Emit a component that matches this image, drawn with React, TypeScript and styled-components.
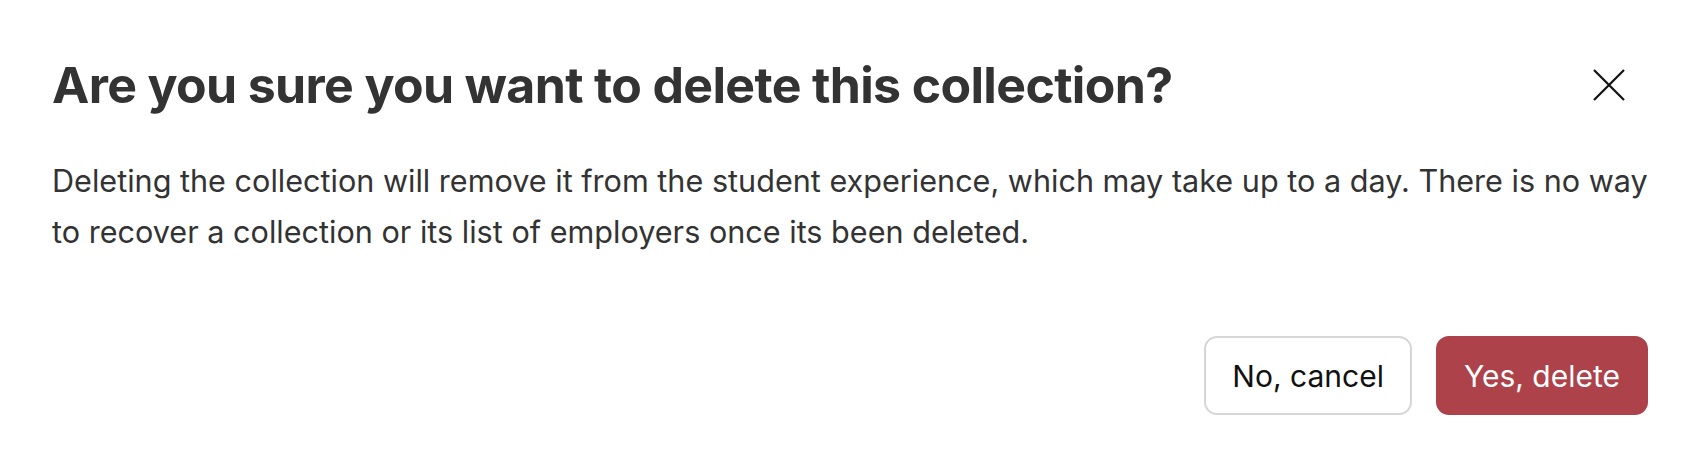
import React from "react";
import styled, { createGlobalStyle } from "styled-components";

const Global = createGlobalStyle`
  html, body { margin: 0; padding: 0; background: #ffffff; }
  body { font-family: Inter, "Liberation Sans", sans-serif; }
`;

const Dialog = styled.div`
  box-sizing: border-box;
  width: 1702px;
  height: 466px;
  padding: 57px 54px 51px 52px;
  display: flex;
  flex-direction: column;
  background: #fff;
`;

const Header = styled.div`
  display: flex;
  align-items: center;
  justify-content: space-between;
`;

const Title = styled.h2`
  margin: 0;
  font-family: Inter, "Liberation Sans", sans-serif;
  font-weight: 700;
  font-size: 50px;
  line-height: 56px;
  letter-spacing: -0.65px;
  color: #333333;
`;

const CloseButton = styled.button`
  width: 44px;
  height: 44px;
  margin-right: 17px;
  padding: 0;
  border: none;
  background: transparent;
  display: flex;
  align-items: center;
  justify-content: center;
  cursor: pointer;
`;

const Body = styled.p`
  margin: 42px 0 0;
  font-family: Inter, "Liberation Sans", sans-serif;
  font-size: 30.6px;
  line-height: 51px;
  color: #333333;
`;

const Footer = styled.div`
  margin-top: auto;
  display: flex;
  justify-content: flex-end;
  gap: 24px;
`;

const Button = styled.button<{ $variant: "secondary" | "danger" }>`
  box-sizing: border-box;
  height: 79px;
  padding: 0 26px;
  border-radius: 13px;
  font-family: Inter, "Liberation Sans", sans-serif;
  font-size: 30px;
  font-weight: 400;
  cursor: pointer;
  border: 2px solid ${(p) => (p.$variant === "danger" ? "#ad424a" : "#d6d6d6")};
  background: ${(p) => (p.$variant === "danger" ? "#ad424a" : "#ffffff")};
  color: ${(p) => (p.$variant === "danger" ? "#ffffff" : "#111111")};
`;

const XIcon = () => (
  <svg width="32" height="32" viewBox="0 0 32 32" fill="none">
    <path d="M1 1L31 31M31 1L1 31" stroke="#111" strokeWidth="2.2" />
  </svg>
);

export default function App() {
  return (
    <>
      <Global />
      <Dialog role="dialog">
        <Header>
          <Title>Are you sure you want to delete this collection?</Title>
          <CloseButton aria-label="Close">
            <XIcon />
          </CloseButton>
        </Header>
        <Body>
          Deleting the collection will remove it from the student experience, which may take up to a day. There is no way
          to recover a collection or its list of employers once its been deleted.
        </Body>
        <Footer>
          <Button $variant="secondary">No, cancel</Button>
          <Button $variant="danger">Yes, delete</Button>
        </Footer>
      </Dialog>
    </>
  );
}
